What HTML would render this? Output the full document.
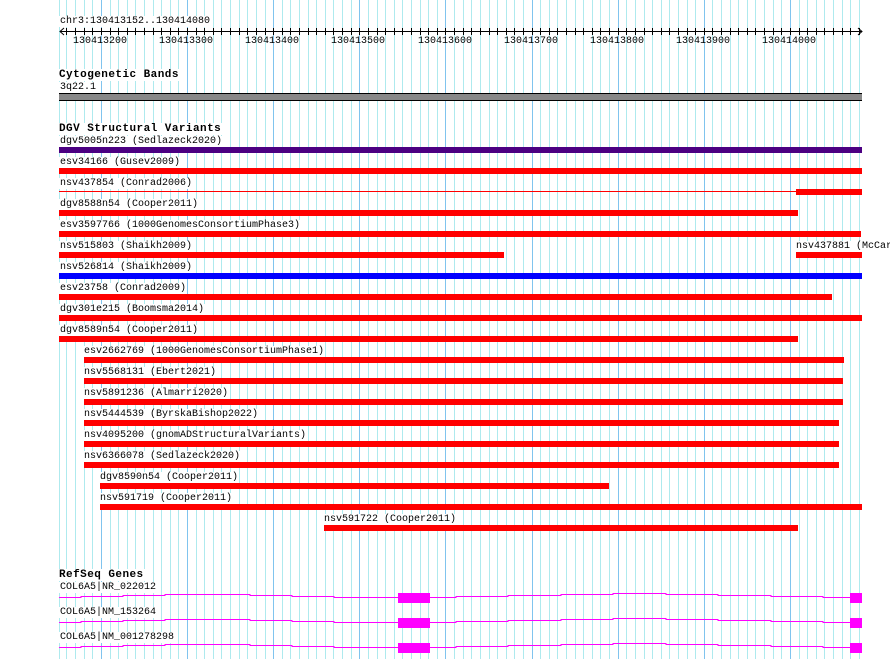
<!DOCTYPE html>
<html><head><meta charset="utf-8"><style>
html,body{margin:0;padding:0;background:#fff;}
body{width:890px;height:659px;position:relative;overflow:hidden;font-family:"Liberation Mono","DejaVu Sans Mono",monospace;font-size:10px;color:#000;}
svg{position:absolute;left:0;top:0;}
.l{position:absolute;background:#fff;line-height:11px;height:11px;white-space:nowrap;padding:0 1px 0 1px;}
.t{position:absolute;font-weight:bold;font-size:11px;letter-spacing:0.45px;line-height:12px;background:#fff;white-space:nowrap;padding-right:1px;}
.r{position:absolute;line-height:11px;white-space:nowrap;}
</style></head><body>
<svg width="890" height="659" viewBox="0 0 890 659">
<path stroke="#aeeaee" stroke-width="1" fill="none" d="M59.5 0v659M66.5 0v659M75.5 0v659M84.5 0v659M92.5 0v659M110.5 0v659M118.5 0v659M127.5 0v659M135.5 0v659M144.5 0v659M153.5 0v659M161.5 0v659M170.5 0v659M178.5 0v659M196.5 0v659M204.5 0v659M213.5 0v659M221.5 0v659M230.5 0v659M239.5 0v659M247.5 0v659M256.5 0v659M265.5 0v659M282.5 0v659M290.5 0v659M299.5 0v659M308.5 0v659M316.5 0v659M325.5 0v659M333.5 0v659M342.5 0v659M351.5 0v659M368.5 0v659M377.5 0v659M385.5 0v659M394.5 0v659M402.5 0v659M411.5 0v659M420.5 0v659M428.5 0v659M437.5 0v659M454.5 0v659M463.5 0v659M471.5 0v659M480.5 0v659M489.5 0v659M497.5 0v659M506.5 0v659M514.5 0v659M523.5 0v659M540.5 0v659M549.5 0v659M557.5 0v659M566.5 0v659M575.5 0v659M583.5 0v659M592.5 0v659M600.5 0v659M609.5 0v659M626.5 0v659M635.5 0v659M644.5 0v659M652.5 0v659M661.5 0v659M669.5 0v659M678.5 0v659M687.5 0v659M695.5 0v659M712.5 0v659M721.5 0v659M730.5 0v659M738.5 0v659M747.5 0v659M755.5 0v659M764.5 0v659M773.5 0v659M781.5 0v659M799.5 0v659M807.5 0v659M816.5 0v659M824.5 0v659M833.5 0v659M842.5 0v659M850.5 0v659M859.5 0v659"/>
<path stroke="#80c4ee" stroke-width="1" fill="none" d="M101.5 0v659M187.5 0v659M273.5 0v659M359.5 0v659M445.5 0v659M532.5 0v659M618.5 0v659M704.5 0v659M790.5 0v659"/>
<!-- ruler -->
<rect x="60" y="31" width="802" height="1" fill="#000"/>
<path stroke="#000" stroke-width="1" fill="none" d="M66.5 28v7M75.5 28v7M84.5 28v7M92.5 28v7M101.5 28v7M110.5 28v7M118.5 28v7M127.5 28v7M135.5 28v7M144.5 28v7M153.5 28v7M161.5 28v7M170.5 28v7M178.5 28v7M187.5 28v7M196.5 28v7M204.5 28v7M213.5 28v7M221.5 28v7M230.5 28v7M239.5 28v7M247.5 28v7M256.5 28v7M265.5 28v7M273.5 28v7M282.5 28v7M290.5 28v7M299.5 28v7M308.5 28v7M316.5 28v7M325.5 28v7M333.5 28v7M342.5 28v7M351.5 28v7M359.5 28v7M368.5 28v7M377.5 28v7M385.5 28v7M394.5 28v7M402.5 28v7M411.5 28v7M420.5 28v7M428.5 28v7M437.5 28v7M445.5 28v7M454.5 28v7M463.5 28v7M471.5 28v7M480.5 28v7M489.5 28v7M497.5 28v7M506.5 28v7M514.5 28v7M523.5 28v7M532.5 28v7M540.5 28v7M549.5 28v7M557.5 28v7M566.5 28v7M575.5 28v7M583.5 28v7M592.5 28v7M600.5 28v7M609.5 28v7M618.5 28v7M626.5 28v7M635.5 28v7M644.5 28v7M652.5 28v7M661.5 28v7M669.5 28v7M678.5 28v7M687.5 28v7M695.5 28v7M704.5 28v7M712.5 28v7M721.5 28v7M730.5 28v7M738.5 28v7M747.5 28v7M755.5 28v7M764.5 28v7M773.5 28v7M781.5 28v7M790.5 28v7M799.5 28v7M807.5 28v7M816.5 28v7M824.5 28v7M833.5 28v7M842.5 28v7M850.5 28v7M859.5 28v7"/>
<path d="M64 28 L60 31.5 L64 35 M858 28 L862 31.5 L858 35" stroke="#000" fill="none" stroke-width="1"/>
<!-- cyto band -->
<rect x="59" y="93" width="803" height="8" fill="#888"/>
<rect x="59" y="93" width="803" height="1" fill="#000"/>
<rect x="59" y="100" width="803" height="1" fill="#000"/>
<!-- DGV bars -->
<rect x="59" y="147" width="803" height="6" fill="#4b0082"/>
<rect x="59" y="168" width="803" height="6" fill="#f00"/>
<rect x="59" y="191" width="737" height="1" fill="#f00"/>
<rect x="796" y="189" width="66" height="6" fill="#f00"/>
<rect x="59" y="210" width="739" height="6" fill="#f00"/>
<rect x="59" y="231" width="802" height="6" fill="#f00"/>
<rect x="59" y="252" width="445" height="6" fill="#f00"/>
<rect x="796" y="252" width="66" height="6" fill="#f00"/>
<rect x="59" y="273" width="803" height="6" fill="#00f"/>
<rect x="59" y="294" width="773" height="6" fill="#f00"/>
<rect x="59" y="315" width="803" height="6" fill="#f00"/>
<rect x="59" y="336" width="739" height="6" fill="#f00"/>
<rect x="84" y="357" width="760" height="6" fill="#f00"/>
<rect x="84" y="378" width="759" height="6" fill="#f00"/>
<rect x="84" y="399" width="759" height="6" fill="#f00"/>
<rect x="84" y="420" width="755" height="6" fill="#f00"/>
<rect x="84" y="441" width="755" height="6" fill="#f00"/>
<rect x="84" y="462" width="755" height="6" fill="#f00"/>
<rect x="100" y="483" width="509" height="6" fill="#f00"/>
<rect x="100" y="504" width="762" height="6" fill="#f00"/>
<rect x="324" y="525" width="474" height="6" fill="#f00"/>
<!-- genes -->
<g fill="none" stroke="#f0f" stroke-width="1">
<path d="M59 597.5 H81 V596.5 H123 V595.5 H165 V594.5 H207 V594.5 H250 V595.5 H292 V596.5 H334 V597.5 H398 M430 597.5 H456 V596.5 H508 V595.5 H561 V594.5 H613 V593.5 H666 V594.5 H718 V595.5 H771 V596.5 H823 V597.5 H850"/>
<path d="M59 622.5 H81 V621.5 H123 V620.5 H165 V619.5 H207 V619.5 H250 V620.5 H292 V621.5 H334 V622.5 H398 M430 622.5 H456 V621.5 H508 V620.5 H561 V619.5 H613 V618.5 H666 V619.5 H718 V620.5 H771 V621.5 H823 V622.5 H850"/>
<path d="M59 647.5 H81 V646.5 H123 V645.5 H165 V644.5 H207 V644.5 H250 V645.5 H292 V646.5 H334 V647.5 H398 M430 647.5 H456 V646.5 H508 V645.5 H561 V644.5 H613 V643.5 H666 V644.5 H718 V645.5 H771 V646.5 H823 V647.5 H850"/>
</g>
<g fill="#f0f">
<rect x="398" y="593" width="32" height="10"/><rect x="850" y="593" width="12" height="10"/>
<rect x="398" y="618" width="32" height="10"/><rect x="850" y="618" width="12" height="10"/>
<rect x="398" y="643" width="32" height="10"/><rect x="850" y="643" width="12" height="10"/>
</g>
</svg>
<div class="l" style="left:59px;top:16px;">chr3:130413152..130414080</div>
<div class="r" style="left:73px;top:36px;">130413200</div>
<div class="r" style="left:159px;top:36px;">130413300</div>
<div class="r" style="left:245px;top:36px;">130413400</div>
<div class="r" style="left:331px;top:36px;">130413500</div>
<div class="r" style="left:418px;top:36px;">130413600</div>
<div class="r" style="left:504px;top:36px;">130413700</div>
<div class="r" style="left:590px;top:36px;">130413800</div>
<div class="r" style="left:676px;top:36px;">130413900</div>
<div class="r" style="left:762px;top:36px;">130414000</div>
<div class="t" style="left:59px;top:69px;">Cytogenetic Bands</div>
<div class="l" style="left:59px;top:82px;">3q22.1</div>
<div class="t" style="left:59px;top:123px;">DGV Structural Variants</div>
<div class="l" style="left:59px;top:136px;">dgv5005n223 (Sedlazeck2020)</div>
<div class="l" style="left:59px;top:157px;">esv34166 (Gusev2009)</div>
<div class="l" style="left:59px;top:178px;">nsv437854 (Conrad2006)</div>
<div class="l" style="left:59px;top:199px;">dgv8588n54 (Cooper2011)</div>
<div class="l" style="left:59px;top:220px;">esv3597766 (1000GenomesConsortiumPhase3)</div>
<div class="l" style="left:59px;top:241px;">nsv515803 (Shaikh2009)</div>
<div class="l" style="left:795px;top:241px;">nsv437881 (McCar</div>
<div class="l" style="left:59px;top:262px;">nsv526814 (Shaikh2009)</div>
<div class="l" style="left:59px;top:283px;">esv23758 (Conrad2009)</div>
<div class="l" style="left:59px;top:304px;">dgv301e215 (Boomsma2014)</div>
<div class="l" style="left:59px;top:325px;">dgv8589n54 (Cooper2011)</div>
<div class="l" style="left:83px;top:346px;">esv2662769 (1000GenomesConsortiumPhase1)</div>
<div class="l" style="left:83px;top:367px;">nsv5568131 (Ebert2021)</div>
<div class="l" style="left:83px;top:388px;">nsv5891236 (Almarri2020)</div>
<div class="l" style="left:83px;top:409px;">nsv5444539 (ByrskaBishop2022)</div>
<div class="l" style="left:83px;top:430px;">nsv4095200 (gnomADStructuralVariants)</div>
<div class="l" style="left:83px;top:451px;">nsv6366078 (Sedlazeck2020)</div>
<div class="l" style="left:99px;top:472px;">dgv8590n54 (Cooper2011)</div>
<div class="l" style="left:99px;top:493px;">nsv591719 (Cooper2011)</div>
<div class="l" style="left:323px;top:514px;">nsv591722 (Cooper2011)</div>
<div class="t" style="left:59px;top:569px;">RefSeq Genes</div>
<div class="l" style="left:59px;top:582px;">COL6A5|NR_022012</div>
<div class="l" style="left:59px;top:607px;">COL6A5|NM_153264</div>
<div class="l" style="left:59px;top:632px;">COL6A5|NM_001278298</div>
</body></html>
